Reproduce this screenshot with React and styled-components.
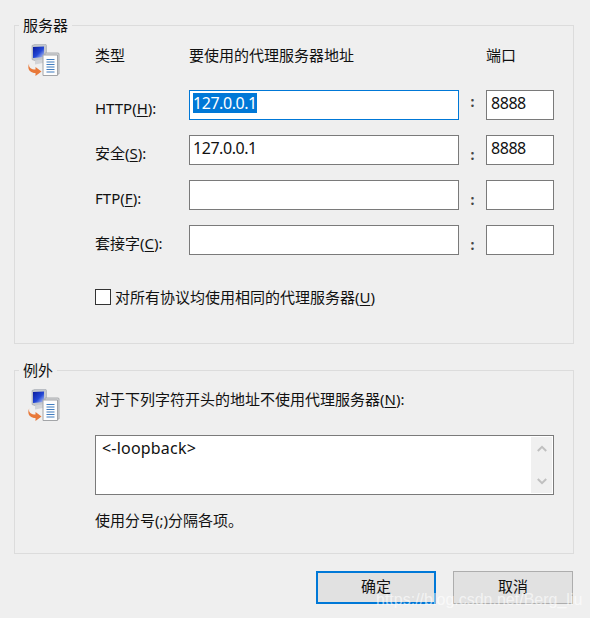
import React from "react";
import styled, { createGlobalStyle } from "styled-components";

const GlobalStyle = createGlobalStyle`
  html, body {
    margin: 0;
    padding: 0;
    background: #efefef;
  }
  * {
    box-sizing: border-box;
  }
`;

const Dialog = styled.div`
  position: relative;
  width: 590px;
  height: 618px;
  overflow: hidden;
  padding: 16px 16px 0 14px;
  background: #efefef;
  color: #111;
  font-family: "Noto Sans", "Noto Sans CJK SC", sans-serif;
  font-size: 15px;
  line-height: 20px;
`;

const Group = styled.fieldset`
  margin: 0 0 ${(p) => p.$after}px;
  padding: 0;
  width: 560px;
  height: ${(p) => p.$height}px;
  border: 1px solid #dcdcdc;
  display: grid;
  grid-template-columns: 80px 1fr;
  align-content: start;
`;

const Legend = styled.legend`
  margin-left: 4px;
  padding: 0 4px;
  font-size: 15px;
  line-height: 18px;
`;

const IconCell = styled.div`
  padding: 10px 0 0 13px;
`;

const ProxyGrid = styled.div`
  display: grid;
  grid-template-columns: 94px 270px 27px 68px;
  grid-template-rows: 30px repeat(4, 30px) auto;
  row-gap: 15px;
  align-items: center;
  padding-top: 11px;
`;

const HeadRow = styled.div`
  grid-column: 1 / -1;
  display: grid;
  grid-template-columns: subgrid;
  align-self: start;
`;

const HeadCell = styled.div`
  grid-column: ${(p) => p.$col};
`;

const RowLabel = styled.label`
  padding-top: 6px;
`;

const Field = styled.div`
  height: 30px;
  background: #fff;
  border: 1px solid ${(p) => (p.$focused ? "#0078d7" : "#7a7a7a")};
  padding: 0 3px 0 ${(p) => p.$inset}px;
  font-size: 16px;
  line-height: 24px;
  letter-spacing: -0.45px;
  white-space: nowrap;
  overflow: hidden;
`;

const Selected = styled.span`
  background: #0078d7;
  color: #fff;
  display: inline-block;
  height: 20px;
  line-height: 21px;
  margin-top: 2px;
`;

const Colon = styled.span`
  text-align: center;
  font-weight: 700;
  font-size: 14px;
  color: #444;
  padding-top: ${(p) => (p.$high ? 0 : 10)}px;
  margin-top: ${(p) => (p.$high ? -6 : 0)}px;
`;

const CheckRow = styled.div`
  grid-column: 1 / -1;
  display: flex;
  align-items: center;
  gap: 4px;
  margin-top: 17px;
  white-space: nowrap;
`;

const CheckBox = styled.span`
  flex: none;
  width: 16px;
  height: 16px;
  background: #fff;
  border: 1px solid #333;
`;

const ExceptionBody = styled.div`
  padding-top: 10px;
`;

const TextArea = styled.div`
  position: relative;
  width: 459px;
  height: 60px;
  margin: 26px 0 15px;
  background: #fff;
  border: 1px solid #7a7a7a;
  padding: 2px 6px;
  font-size: 16px;
  letter-spacing: 0.2px;
`;

const ScrollTrack = styled.div`
  position: absolute;
  top: 1px;
  right: 1px;
  bottom: 1px;
  width: 21px;
  background: #f0f0f0;
  display: flex;
  flex-direction: column;
  justify-content: space-between;
  align-items: center;
  padding: 8px 0;
`;

const ButtonRow = styled.div`
  display: flex;
  justify-content: flex-end;
  gap: 17px;
  padding-right: 1px;
  margin-top: 17px;
`;

const Button = styled.button`
  width: 120px;
  height: 33px;
  padding: 0 0 3px;
  background: #e1e1e1;
  border: ${(p) => (p.$primary ? "2px solid #0078d7" : "1px solid #adadad")};
  font: inherit;
  color: #111;
`;

const Watermark = styled.div`
  position: absolute;
  left: 376px;
  top: 590px;
  font-family: "Liberation Sans", sans-serif;
  font-size: 16px;
  line-height: 20px;
  color: rgba(255, 255, 255, 0.62);
  white-space: nowrap;
`;

const Underlined = styled.span`
  text-decoration: underline;
  text-underline-offset: 2px;
  text-decoration-thickness: 1px;
`;

function ProxyIcon({ id }) {
  return (
    <svg width="32" height="32" viewBox="0 0 32 32">
      <defs>
        <linearGradient id={id} x1="0" y1="0" x2="1" y2="1">
          <stop offset="0" stopColor="#0a1a9c" />
          <stop offset="0.55" stopColor="#2347d6" />
          <stop offset="1" stopColor="#c9d6f4" />
        </linearGradient>
      </defs>
      <path d="M4 1.500 8 0h9.500l1 1.500V15L8 17 4 15.500z" fill="#c3c7cd" stroke="#a2a7ae" strokeWidth="0.6" />
      <path d="M5 3l11-.5V13L5 14z" fill={`url(#${id})`} />
      <path d="M7 16.500 15 15v4l-8 1.500z" fill="#d2d4d8" />
      <path d="M17 9h13.500l.5 1v20H17z" fill="#d9dadc" stroke="#a9abae" strokeWidth="1" />
      <path d="M15 11h14.500v20.500H15z" fill="#fdfdfd" stroke="#a3a5a8" strokeWidth="1" />
      <path
        d="M18.500 15.500h8M18.500 18h8M18.500 20.500h8M18.500 23h8M18.500 25.500h8M18.500 28h8"
        stroke="#3f7cc0"
        strokeWidth="1.200"
      />
      <path
        d="M1.500 19c-1.500 3 .5 6.500 6 6.500v-2.500l6 4.500-6 4.500v-3C1.500 29 -1.500 24 1.500 19z"
        fill="#e8793a"
      />
    </svg>
  );
}

function Chevron({ up }) {
  return (
    <svg width="10" height="7" viewBox="0 0 10 7">
      <path
        d={up ? "M.8 6L5 1.800 9.200 6" : "M.8 1L5 5.200 9.200 1"}
        fill="none"
        stroke="#c0c0c0"
        strokeWidth="2"
      />
    </svg>
  );
}

const rows = [
  { label: "HTTP", key: "H", address: "127.0.0.1", port: "8888", focused: true },
  { label: "安全", key: "S", address: "127.0.0.1", port: "8888" },
  { label: "FTP", key: "F", address: "", port: "" },
  { label: "套接字", key: "C", address: "", port: "" },
];

export default function App() {
  return (
    <Dialog>
      <GlobalStyle />
      <Group $height={328} $after={17}>
        <Legend>服务器</Legend>
        <IconCell>
          <ProxyIcon id="screen-a" />
        </IconCell>
        <ProxyGrid>
          <HeadRow>
            <HeadCell $col={1}>类型</HeadCell>
            <HeadCell $col={2}>要使用的代理服务器地址</HeadCell>
            <HeadCell $col={4}>端口</HeadCell>
          </HeadRow>
          {rows.map((row) => (
            <React.Fragment key={row.key}>
              <RowLabel>
                {row.label}(<Underlined>{row.key}</Underlined>):
              </RowLabel>
              <Field $focused={row.focused} $inset={3}>
                {row.focused ? <Selected>{row.address}</Selected> : row.address}
              </Field>
              <Colon $high={row.focused}>:</Colon>
              <Field $inset={4}>{row.port}</Field>
            </React.Fragment>
          ))}
          <CheckRow>
            <CheckBox />
            <span>
              对所有协议均使用相同的代理服务器(<Underlined>U</Underlined>)
            </span>
          </CheckRow>
        </ProxyGrid>
      </Group>
      <Group $height={193} $after={0}>
        <Legend>例外</Legend>
        <IconCell>
          <ProxyIcon id="screen-b" />
        </IconCell>
        <ExceptionBody>
          <div>
            对于下列字符开头的地址不使用代理服务器(<Underlined>N</Underlined>):
          </div>
          <TextArea>
            &lt;-loopback&gt;
            <ScrollTrack>
              <Chevron up />
              <Chevron />
            </ScrollTrack>
          </TextArea>
          <div>使用分号(;)分隔各项。</div>
        </ExceptionBody>
      </Group>
      <ButtonRow>
        <Button $primary>确定</Button>
        <Button>取消</Button>
      </ButtonRow>
      <Watermark>https://blog.csdn.net/Berg_liu</Watermark>
    </Dialog>
  );
}
